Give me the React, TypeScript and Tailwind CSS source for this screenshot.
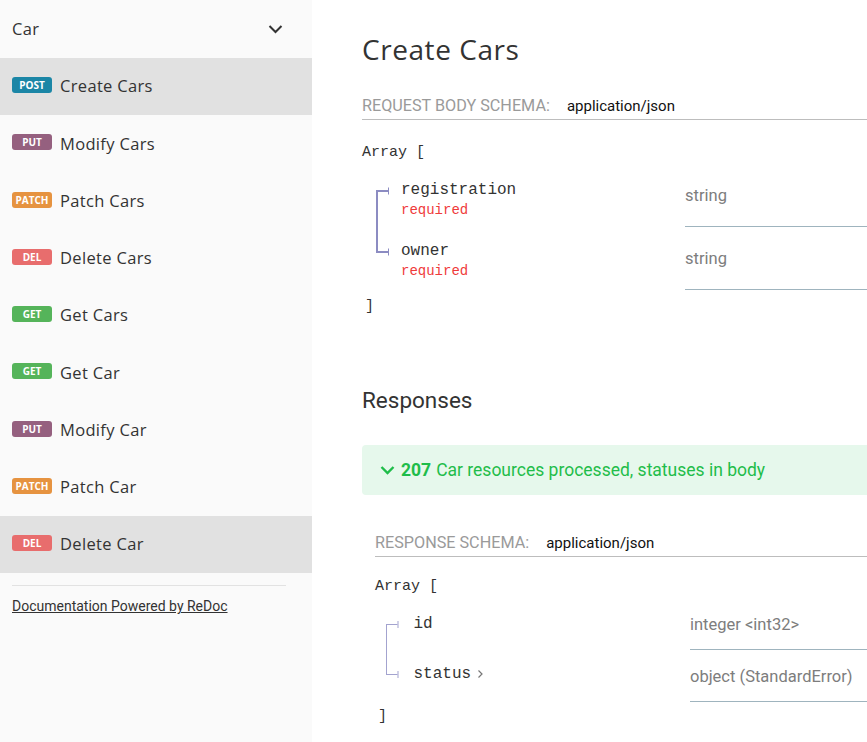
import React from "react";

type Method = "post" | "put" | "patch" | "del" | "get";

const badgeColors: Record<Method, string> = {
  post: "bg-[#1b86a6]",
  put: "bg-[#95607f]",
  patch: "bg-[#e69340]",
  del: "bg-[#e86d6d]",
  get: "bg-[#55b45a]",
};

const items: { method: Method; label: string; active?: boolean }[] = [
  { method: "post", label: "Create Cars", active: true },
  { method: "put", label: "Modify Cars" },
  { method: "patch", label: "Patch Cars" },
  { method: "del", label: "Delete Cars" },
  { method: "get", label: "Get Cars" },
  { method: "get", label: "Get Car" },
  { method: "put", label: "Modify Car" },
  { method: "patch", label: "Patch Car" },
  { method: "del", label: "Delete Car", active: true },
];

const sans = "font-['Open_Sans',sans-serif]";
const roboto = "font-['Roboto',sans-serif]";
const mono = "font-['Liberation_Mono',monospace]";

function Badge({ method }: { method: Method }) {
  return (
    <span
      className={`mb-[3px] inline-flex h-[16px] w-[40px] shrink-0 items-center justify-center rounded-[3px] text-[10px] font-bold uppercase leading-none text-white ${badgeColors[method]}`}
    >
      {method}
    </span>
  );
}

function Sidebar() {
  return (
    <aside className={`flex h-[742px] w-[312px] shrink-0 flex-col bg-[#fafafa] text-[#333] ${sans}`}>
      <div className="flex h-[58px] items-center justify-between pl-3 pr-[29px]">
        <span className="text-[16.5px] tracking-[0.02em]">Car</span>
        <svg width="15" height="10" viewBox="0 0 15 10" fill="none">
          <path d="M1.5 2 L7.5 8 L13.5 2" stroke="#333" strokeWidth="2" />
        </svg>
      </div>
      {items.map((it, i) => (
        <div
          key={i}
          className={`flex h-[57.25px] items-center gap-2 px-3 ${it.active ? "bg-[#e1e1e1]" : ""}`}
        >
          <Badge method={it.method} />
          <span className="text-[16.5px] tracking-[0.02em]">{it.label}</span>
        </div>
      ))}
      <div className="mx-3 mt-3 w-[274px] border-t border-[#e2e2e2]" />
      <a className={`mx-3 mt-[10px] text-[14px] text-[#333] underline ${roboto}`}>
        Documentation Powered by ReDoc
      </a>
    </aside>
  );
}

function Connector({ first, h, y, x, color, w }: { first: boolean; h: number; y: number; x: number; color: string; w: number }) {
  const width = x + 14;
  return (
    <svg width={width} height={h} className="shrink-0">
      <path
        d={first ? `M${x} ${y} V${h}` : `M${x} 0 V${y}`}
        stroke={color}
        strokeWidth={w}
      />
      <path d={`M${x - w / 2} ${y} H${x + 11}`} stroke={color} strokeWidth={w} />
      <path d={`M${x + 11.5} ${y - 3.5} V${y + 3.5}`} stroke={color} strokeWidth="1" />
    </svg>
  );
}

function Chevron() {
  return (
    <svg width="7" height="10" viewBox="0 0 7 10" className="ml-[6px] inline-block" fill="none">
      <path d="M1.5 1.5 L5 5 L1.5 8.5" stroke="#777" strokeWidth="1.2" />
    </svg>
  );
}

function SchemaHeader({ label }: { label: string }) {
  return (
    <div className={`flex items-center gap-[17px] border-b border-[#bdbdbd] pb-[3px] text-[16.2px] leading-[20px] ${roboto}`}>
      <span className="uppercase text-[#9a9a9a]">{label}</span>
      <span className="text-[15px] text-[#111]">application/json</span>
    </div>
  );
}

export default function App() {
  return (
    <div className="flex h-[742px] w-[867px] overflow-hidden bg-white">
      <Sidebar />
      <main className="min-w-0 flex-1 overflow-hidden pl-[50px]">
        <div className="w-[560px]">
          <h1 className={`pt-[31px] text-[28px] font-normal leading-[36px] tracking-[0.02em] text-[#333] ${sans}`}>
            Create Cars
          </h1>

          <div className="mt-[29px]">
            <SchemaHeader label="Request Body Schema:" />
          </div>

          <div className={`mt-[24px] text-[15px] leading-[18px] text-[#333] ${mono}`}>Array [</div>

          {[
            { name: "registration", type: "string" },
            { name: "owner", type: "string" },
          ].map((r, i) => (
            <div key={r.name} className={`flex ${i === 0 ? "mt-[2px]" : ""}`}>
              <div className="flex w-[323px] shrink-0">
                <Connector first={i === 0} h={63} y={i === 0 ? 27 : 25} x={15} color="#8c8cc2" w={2} />
                <div className={`flex flex-col items-start pl-[10px] ${i === 0 ? "pt-[16px]" : "pt-[14px]"}`}>
                  <span className={`text-[16px] leading-[20px] text-[#333] ${mono}`}>{r.name}</span>
                  <span className={`text-[14px] leading-[20px] text-[#ef3b3b] ${mono}`}>required</span>
                </div>
              </div>
              <div className={`flex-1 border-b border-[#9fb4be] pb-[20px] pt-[22px] text-[16.5px] leading-[20px] text-[#7d7d7d] ${roboto}`}>
                {r.type}
              </div>
            </div>
          ))}

          <div className={`ml-[3px] mt-[8px] text-[15px] leading-[18px] text-[#333] ${mono}`}>]</div>

          <h2 className={`mt-[69px] text-[22.5px] font-normal leading-[30px] text-[#333] ${roboto}`}>Responses</h2>

          <div className={`mt-[30px] flex h-[50px] items-center rounded-[4px] bg-[#e6f8ec] pl-[18px] text-[17.5px] text-[#1fbd4a] ${roboto}`}>
            <svg width="15" height="10" viewBox="0 0 15 10" fill="none" className="mr-[6px]">
              <path d="M1.5 2 L7.5 8 L13.5 2" stroke="#1fbd4a" strokeWidth="2.4" />
            </svg>
            <span className="mr-[5px] font-bold">207</span>
            <span>Car resources processed, statuses in body</span>
          </div>

          <div className="ml-[13px]">
            <div className="mt-[38px]">
              <SchemaHeader label="Response Schema:" />
            </div>
            <div className={`mt-[21px] text-[15px] leading-[18px] text-[#333] ${mono}`}>Array [</div>

            {[
              { name: "id", type: "integer <int32>", more: false },
              { name: "status", type: "object (StandardError)", more: true },
            ].map((r, i) => (
              <div key={r.name} className={`flex ${i === 0 ? "mt-[2px]" : ""}`}>
                <div className="flex w-[315px] shrink-0">
                  <Connector first={i === 0} h={52} y={i === 0 ? 26.5 : 24.5} x={11.5} color="#a3a3cf" w={1} />
                  <div className={`flex items-start pl-[13px] ${i === 0 ? "pt-[16px]" : "pt-[14px]"}`}>
                    <span className={`flex items-center text-[16px] leading-[20px] text-[#333] ${mono}`}>
                      {r.name}
                      {r.more && <Chevron />}
                    </span>
                  </div>
                </div>
                <div className={`flex-1 border-b border-[#9fb4be] pb-[14px] pt-[17px] text-[16.5px] leading-[20px] text-[#7d7d7d] ${roboto}`}>
                  {r.type}
                </div>
              </div>
            ))}

            <div className={`ml-[3px] mt-[6px] text-[15px] leading-[18px] text-[#333] ${mono}`}>]</div>
          </div>
        </div>
      </main>
    </div>
  );
}
